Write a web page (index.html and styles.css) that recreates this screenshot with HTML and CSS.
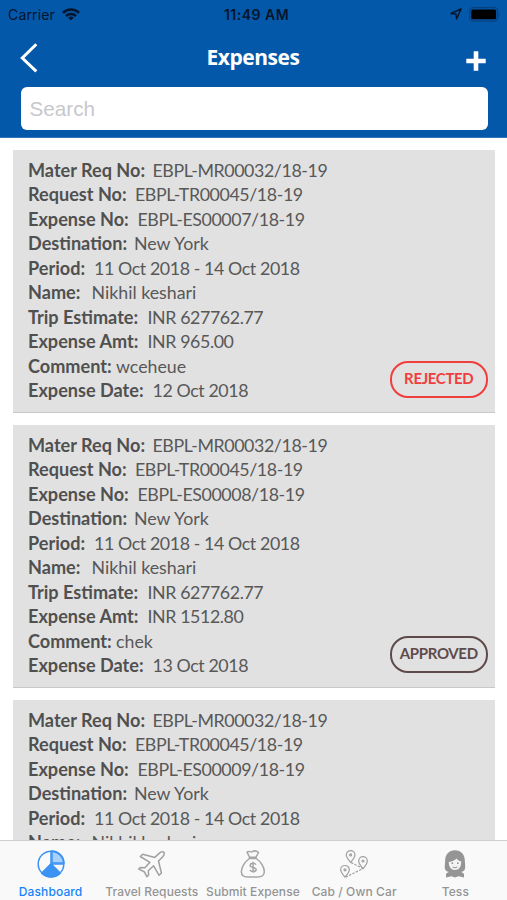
FILE: index.html
```html
<!DOCTYPE html>
<html lang="en">

<head>
  <meta charset="UTF-8">
  <title>Expenses</title>
  <meta name="viewport" content="width=device-width, initial-scale=1">
  <link rel="stylesheet" href="styles.css">
</head>

<body>

  <!-- Header -->
  <header>
    <div class="status-bar">
      <div class="carrier">
        <span>Carrier</span>
        <svg width="18" height="13" viewBox="0 0 18 13" fill="none" stroke="#06152b" stroke-width="2.5">
          <path d="M1 4.8a11.5 11.5 0 0 1 16 0"/>
          <path d="M4 8a7.2 7.2 0 0 1 10 0"/>
          <path d="M9 12.6L6.2 9.8a4 4 0 0 1 5.6 0z" fill="#06152b" stroke="none"/>
        </svg>
      </div>
      <div class="time">11:49 AM</div>
      <div class="battery">
        <svg width="12" height="12" viewBox="0 0 12 12" fill="none" stroke="#06152b" stroke-width="1.5" stroke-linejoin="round">
          <path d="M11 1L1 5.4l4.9.7.6 4.9z"/>
        </svg>
        <svg width="32" height="15" viewBox="0 0 32 15">
          <rect x=".7" y=".7" width="28" height="13.4" rx="3.5" fill="none" stroke="#07407f" stroke-width="1.3"/>
          <rect x="2.3" y="2.6" width="24.8" height="9.6" rx="1.5" fill="#000"/>
          <path d="M30 5.2q1.6 2.2 0 4.4z" fill="#07407f"/>
        </svg>
      </div>
    </div>
    <div class="nav-bar">
      <svg width="18" height="30" viewBox="0 0 18 30" fill="none" stroke="#fff" stroke-width="3">
        <path d="M16.3 1.3L2.3 15l14 13.3"/>
      </svg>
      <h1>Expenses</h1>
      <svg class="add" width="20" height="20" viewBox="0 0 20 20" stroke="#fff" stroke-width="4.6">
        <path d="M10 .3v19.4M.3 10h19.4"/>
      </svg>
    </div>
    <input type="text" class="search" placeholder="Search">
  </header>

  <!-- Expense list -->
  <main>
    <div class="card">
      <p><b class="mater">Mater Req No:</b><span class="num">EBPL-MR00032/18-19</span></p>
      <p><b class="request">Request No:</b><span class="num">EBPL-TR00045/18-19</span></p>
      <p><b class="expense">Expense No:</b><span class="num">EBPL-ES00007/18-19</span></p>
      <p><b class="destination">Destination:</b><span>New York</span></p>
      <p><b class="period">Period:</b><span class="num">11 Oct 2018 - 14 Oct 2018</span></p>
      <p><b class="name">Name:</b><span>Nikhil keshari</span></p>
      <p><b class="amount">Trip Estimate:</b><span class="num">INR 627762.77</span></p>
      <p><b class="amount">Expense Amt:</b><span class="num">INR 965.00</span></p>
      <p><b class="comment">Comment:</b><span>wceheue</span></p>
      <p><b class="date">Expense Date:</b><span class="num">12 Oct 2018</span></p>
      <div class="status rejected">REJECTED</div>
    </div>

    <div class="card">
      <p><b class="mater">Mater Req No:</b><span class="num">EBPL-MR00032/18-19</span></p>
      <p><b class="request">Request No:</b><span class="num">EBPL-TR00045/18-19</span></p>
      <p><b class="expense">Expense No:</b><span class="num">EBPL-ES00008/18-19</span></p>
      <p><b class="destination">Destination:</b><span>New York</span></p>
      <p><b class="period">Period:</b><span class="num">11 Oct 2018 - 14 Oct 2018</span></p>
      <p><b class="name">Name:</b><span>Nikhil keshari</span></p>
      <p><b class="amount">Trip Estimate:</b><span class="num">INR 627762.77</span></p>
      <p><b class="amount">Expense Amt:</b><span class="num">INR 1512.80</span></p>
      <p><b class="comment">Comment:</b><span>chek</span></p>
      <p><b class="date">Expense Date:</b><span class="num">13 Oct 2018</span></p>
      <div class="status approved">APPROVED</div>
    </div>

    <div class="card">
      <p><b class="mater">Mater Req No:</b><span class="num">EBPL-MR00032/18-19</span></p>
      <p><b class="request">Request No:</b><span class="num">EBPL-TR00045/18-19</span></p>
      <p><b class="expense">Expense No:</b><span class="num">EBPL-ES00009/18-19</span></p>
      <p><b class="destination">Destination:</b><span>New York</span></p>
      <p><b class="period">Period:</b><span class="num">11 Oct 2018 - 14 Oct 2018</span></p>
      <p><b class="name">Name:</b><span>Nikhil keshari</span></p>
    </div>
  </main>

  <!-- Tab bar -->
  <footer>
    <a class="tab active">
      <svg width="28" height="28" viewBox="0 0 28 28" fill="none" stroke="#3b93f3" stroke-width="1.5">
        <path d="M14 14l9.2 9.2a13 13 0 0 1-18.4 0z" fill="#3b93f3"/>
        <path d="M15 13V1a12.5 12.5 0 0 1 12 12z" fill="#a9d0fb"/>
        <circle cx="14" cy="14" r="12.8"/>
        <path d="M14 1v13l-9.2 9.2M14 14h13M14 14l9.2 9.2"/>
      </svg>
      <span>Dashboard</span>
    </a>
    <a class="tab">
      <svg width="28" height="28" viewBox="0 0 28 28" fill="none" stroke="#a0a0a0" stroke-width="1.5" stroke-linejoin="round">
        <path d="M25.8 2.2c-1.6-1-3.4 0-4.7 1.2l-4.3 4L4.700 4.200 2.300 6.500l9.600 5.800-5 5.500-4.600-.4-1.500 1.700 5.400 2.600 2.700 5 1.700-1.700-.3-4.300 5.300-4.900 5.500 9.500 2.300-2.300-2.900-12 4.200-4.300c1.200-1.300 2-3 1.100-4.500z"/>
      </svg>
      <span>Travel Requests</span>
    </a>
    <a class="tab">
      <svg width="28" height="28" viewBox="0 0 28 28" fill="none" stroke="#a6a6a6" stroke-width="1.5" stroke-linejoin="round">
        <path d="M10.5 7.2L8 2.2c2-2 3.6.4 5.2-.5 2-1.3 4.8-.5 6.4.8l-2.7 4.7z"/>
        <path d="M10.5 8.5C6 11.5 2.2 17.5 2.4 22c.2 3.7 2.8 5 6 5h10.300c3.700 0 6.400-1.400 6.600-5 .2-5-3.700-10.500-8.200-13.500z"/>
        <path d="M9.8 7.8h8"/>
        <path d="M17 14.7c-1.200-2-5.800-1.800-5.800.7 0 2.800 6 1.300 6 4.200 0 2.500-5.200 2.600-6.300.3M14.100 11.800v11"/>
      </svg>
      <span>Submit Expense</span>
    </a>
    <a class="tab">
      <svg width="28" height="28" viewBox="0 0 28 28" fill="none" stroke="#a0a0a0" stroke-width="1.2">
        <path d="M10.6 12.3S6.3 7.5 6.3 4.9a4.3 4.3 0 0 1 8.6 0c0 2.6-4.3 7.4-4.3 7.4z"/>
        <path d="M23 18.6s-4.3-4.8-4.3-7.6a4.3 4.3 0 0 1 8.6 0c0 2.8-4.3 7.6-4.3 7.6z"/>
        <path d="M5 27.2S.7 22.4.7 19.8a4.3 4.3 0 0 1 8.6 0c0 2.6-4.3 7.4-4.3 7.4z"/>
        <circle cx="10.6" cy="4.9" r="1"/>
        <circle cx="23" cy="11" r="1"/>
        <circle cx="5" cy="19.8" r="1"/>
        <path d="M11 12.500l12 6L6 27" stroke-dasharray="2.500 1.300"/>
      </svg>
      <span>Cab / Own Car</span>
    </a>
    <a class="tab">
      <svg width="22" height="28" viewBox="0 0 22 28">
        <path d="M11 .3C4.800.3 1.200 4.500 1.100 11c-.1 4.500-1 7.500.8 9.500.8.9 2 1.200 3 1.500-1.500.8-2.900 1.300-2.900 2.500v3l5.500-1.200L11 27.500l3.500-1.200 5.500 1.200v-3c0-1.200-1.400-1.700-2.900-2.500 1-.3 2.200-.6 3-1.500 1.800-2 .9-5 .8-9.500C20.800 4.500 17.200.3 11 .3z" fill="#959595"/>
        <path d="M4.800 12c3.400-.4 6-1.500 7.700-3.500 1.200 1.500 2.800 2.600 4.700 3 .2 5.200-2.300 8.500-6.200 8.500s-6.400-3.500-6.200-8z" fill="#f3f3f3"/>
        <circle cx="8.300" cy="13.200" r=".9" fill="#959595"/>
        <circle cx="13.900" cy="13.200" r=".9" fill="#959595"/>
        <path d="M8.600 17q2.400 1.500 4.800 0" fill="none" stroke="#959595"/>
      </svg>
      <span>Tess</span>
    </a>
  </footer>

</body>

</html>
```
FILE: styles.css
```css
/* Basic Reset */
* {
  margin: 0;
  padding: 0;
  box-sizing: border-box;
}

body {
  font-family: Lato, sans-serif;
  height: 100vh;
  display: flex;
  flex-direction: column;
  overflow: hidden;
  background: white;
}

/* Header */
header {
  height: 138px;
  flex-shrink: 0;
  background-color: #0458a9;
  border-bottom: 1px solid #2f75b8;
}

.status-bar {
  height: 28px;
  padding: 0 6px 0 8px;
  display: grid;
  grid-template-columns: 1fr auto 1fr;
  align-items: center;
  font-family: Inter, sans-serif;
  font-size: 14px;
  color: #06152b;
}

.carrier {
  display: flex;
  align-items: center;
  gap: 7px;
  letter-spacing: 0.15px;
}

.time {
  font-weight: 600;
  letter-spacing: 0.5px;
  padding-left: 4px;
}

.battery {
  display: flex;
  align-items: center;
  justify-content: flex-end;
  gap: 7px;
}

.nav-bar {
  height: 59px;
  padding: 1px 21px 0 20px;
  display: grid;
  grid-template-columns: 20px 1fr 20px;
  align-items: center;
}

.nav-bar h1 {
  font-family: "Open Sans", sans-serif;
  font-size: 21px;
  font-weight: 700;
  letter-spacing: -0.45px;
  text-align: center;
  color: white;
  padding-bottom: 3px;
}

.add {
  margin-top: 6px;
}

.search {
  display: block;
  width: 467px;
  height: 43px;
  margin-left: 20.5px;
  padding: 0 9px;
  border: none;
  border-radius: 6px;
  background: white;
  font-family: "Liberation Sans", sans-serif;
  font-size: 20.7px;
}

.search::placeholder {
  color: #c8c8cb;
}

/* Expense list */
main {
  flex: 1;
  min-height: 0;
  overflow: hidden;
  padding: 12px 12px 0 13px;
  display: flex;
  flex-direction: column;
  gap: 12px;
}

.card {
  position: relative;
  height: 263px;
  flex-shrink: 0;
  padding: 8px 15px;
  background-color: #e1e1e1;
  border-bottom: 1px solid #c9c9c9;
}

.card p {
  display: flex;
  height: 24.45px;
  line-height: 24.45px;
  font-size: 17.8px;
  color: #585858;
  white-space: nowrap;
}

.card b {
  flex-shrink: 0;
  font-size: 18.1px;
  color: #505050;
}

.num {
  letter-spacing: -0.4px;
}

.mater,
.date {
  width: 124.5px;
}

.request {
  width: 107px;
}

.expense {
  width: 109.5px;
}

.destination {
  width: 106px;
}

.period {
  width: 66px;
}

.name {
  width: 63.5px;
}

.amount {
  width: 119.5px;
}

.comment {
  width: 88px;
}

.status {
  position: absolute;
  right: 7px;
  bottom: 14px;
  width: 98.5px;
  height: 37px;
  line-height: 31px;
  border: 2px solid;
  border-radius: 18px;
  font-size: 15px;
  font-weight: bold;
  letter-spacing: -0.35px;
  text-align: center;
}

.rejected {
  color: #ef3e3b;
}

.approved {
  color: #5f4a4b;
}

/* Tab bar */
footer {
  height: 60px;
  flex-shrink: 0;
  display: grid;
  grid-template-columns: repeat(5, 101.2px);
  border-top: 1px solid #cfcfcf;
  background-color: #f9f9f9;
}

.tab {
  display: flex;
  flex-direction: column;
  align-items: center;
  padding-top: 9px;
  font-family: Inter, sans-serif;
  font-size: 12px;
  font-weight: 500;
  letter-spacing: 0.1px;
  line-height: 16px;
  color: #949494;
  white-space: nowrap;
}

.tab span {
  margin-top: 6px;
}

.active {
  color: #1683fb;
}
```
